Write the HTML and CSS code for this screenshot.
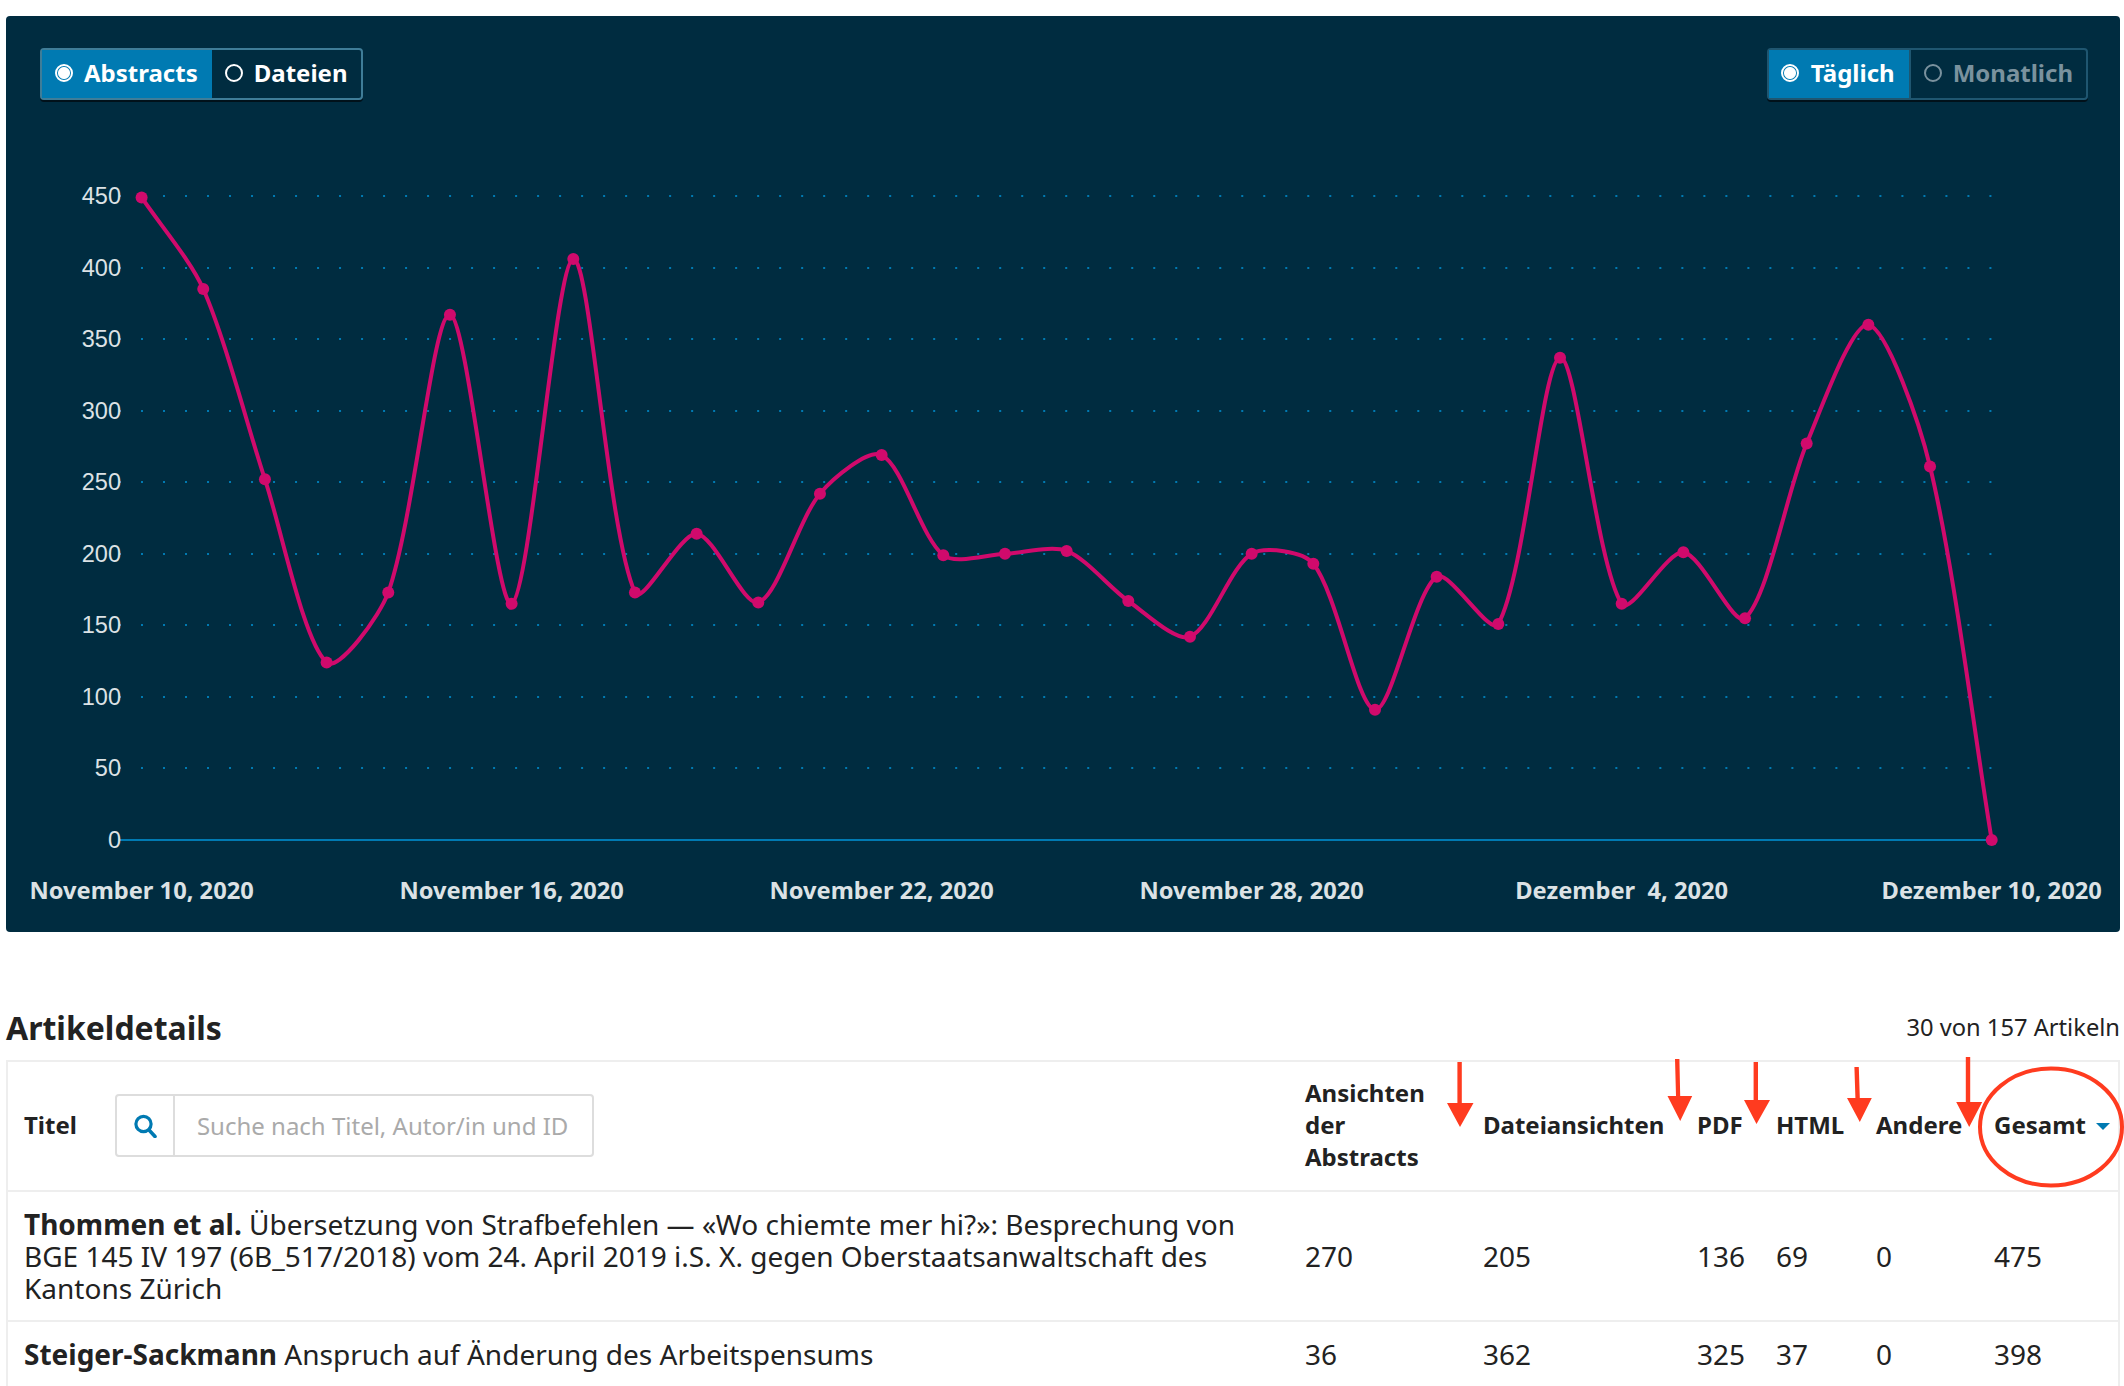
FILE: index.html
```html
<!DOCTYPE html>
<html lang="de">
<head>
    <meta charset="UTF-8">
    <title>Artikelstatistik</title>
    <link rel="stylesheet" href="styles.css">
</head>
<body>
    <main class="page">
        <section class="stats-graph">
            <div class="graph-toolbar">
                <div class="toggle">
                    <span class="toggle-btn is-active"><i class="radio is-checked"></i>Abstracts</span>
                    <span class="toggle-btn"><i class="radio"></i>Dateien</span>
                </div>
                <div class="toggle toggle-range">
                    <span class="toggle-btn is-active"><i class="radio is-checked"></i>Täglich</span>
                    <span class="toggle-btn is-disabled"><i class="radio"></i>Monatlich</span>
                </div>
            </div>
            <svg id="chart" class="chart" viewBox="6 120 2114 812"></svg>
        </section>

        <div class="details-head">
            <h2>Artikeldetails</h2>
            <span class="details-count">30 von 157 Artikeln</span>
        </div>

        <div class="details">
            <table class="details-table">
                <colgroup>
                    <col class="col-title">
                    <col class="col-abstracts">
                    <col class="col-files">
                    <col class="col-pdf">
                    <col class="col-html">
                    <col class="col-other">
                    <col class="col-total">
                </colgroup>
                <thead>
                    <tr>
                        <th class="cell-title">
                            <div class="title-head">
                                <span class="title-label">Titel</span>
                                <div class="search">
                                    <span class="search-icon">
                                        <svg width="24" height="24" viewBox="0 0 24 24"><circle cx="10.5" cy="10" r="7.6" fill="none" stroke="#007ab2" stroke-width="3.2"/><path d="M16 16l6 6.4" fill="none" stroke="#007ab2" stroke-width="3.6" stroke-linecap="round"/></svg>
                                    </span>
                                    <span class="search-input">Suche nach Titel, Autor/in und ID</span>
                                </div>
                            </div>
                        </th>
                        <th class="wrap">Ansichten der Abstracts</th>
                        <th>Dateiansichten</th>
                        <th>PDF</th>
                        <th>HTML</th>
                        <th>Andere</th>
                        <th>Gesamt<i class="sort-arrow"></i></th>
                    </tr>
                </thead>
                <tbody>
                    <tr>
                        <td class="cell-title"><b>Thommen et al.</b> Übersetzung von Strafbefehlen — «Wo chiemte mer hi?»: Besprechung von BGE 145 IV 197 (6B_517/2018) vom 24. April 2019 i.S. X. gegen Oberstaatsanwaltschaft des Kantons Zürich</td>
                        <td>270</td>
                        <td>205</td>
                        <td>136</td>
                        <td>69</td>
                        <td>0</td>
                        <td>475</td>
                    </tr>
                    <tr>
                        <td class="cell-title"><b>Steiger-Sackmann</b> Anspruch auf Änderung des Arbeitspensums</td>
                        <td>36</td>
                        <td>362</td>
                        <td>325</td>
                        <td>37</td>
                        <td>0</td>
                        <td>398</td>
                    </tr>
                </tbody>
            </table>
        </div>
    </main>

    <!-- red markup someone drew on top of the screenshot -->
    <svg class="markup" width="2124" height="1386" viewBox="0 0 2124 1386">
        <g fill="#ff3b1f" stroke="none">
            <path d="M1457.4 1062h4.4v41h11.7l-13.5 24-13-24h10.400z"/>
            <path d="M1675 1059h4.400l.8 37h12l-12 25-12.700-25h8.500z"/>
            <path d="M1753.600 1062h4.400v38h12l-13.500 24-12.500-24h9.600z"/>
            <path d="M1854.400 1067h4.400l1 31h12l-12 24-12.800-24h8.400z"/>
            <path d="M1965.800 1057h4.400v45h12l-13 25-13-25h9.600z"/>
        </g>
        <ellipse cx="2051" cy="1127" rx="71" ry="58.500" fill="none" stroke="#ff3b1f" stroke-width="4"/>
    </svg>

    <script src="chart.js"></script>
</body>
</html>
```

FILE: styles.css
```css
html {
    overflow: hidden;
}
body {
    margin: 0;
    font-family: 'Noto Sans', sans-serif;
    color: #222;
    background-color: white;
}
.page {
    padding: 16px 4px 0 6px;
}
.stats-graph {
    background-color: #002c40;
    border-radius: 4px;
    height: 916px;
}
.graph-toolbar {
    display: flex;
    justify-content: space-between;
    padding: 32px 32px 20px 34px;
}
.toggle {
    display: flex;
    height: 52px;
    box-sizing: border-box;
    border: 2px solid #3f7d98;
    border-radius: 4px;
    box-shadow: 0 2px 0 #00111a;
    color: white;
    font-size: 24px;
    font-weight: 700;
}
.toggle-range {
    border-color: #1f5670;
}
.toggle-btn {
    display: flex;
    align-items: center;
    gap: 11px;
    padding: 0 13px 4px;
}
.toggle-btn.is-active {
    background-color: #007ab2;
    padding-right: 14px;
}
.toggle-btn.is-disabled {
    color: #7a929e;
    border-left: 2px solid #1f5670;
}
.toggle-range .toggle-btn.is-active {
    padding-left: 12px;
    gap: 12px;
}
.radio {
    width: 18px;
    height: 18px;
    margin-top: 2px;
    box-sizing: border-box;
    border: 2px solid currentColor;
    border-radius: 50%;
}
.radio.is-checked {
    background: radial-gradient(circle, white 5.500px, transparent 6.500px);
}
.chart {
    display: block;
    width: 2114px;
    height: 812px;
}
.grid-line {
    stroke: #007ab2;
    stroke-width: 2;
    stroke-dasharray: 2 20.005;
    stroke-dashoffset: 1;
}
.zero-line {
    stroke: #007ab2;
    stroke-width: 2;
}
.data-line {
    fill: none;
    stroke: #d00a6c;
    stroke-width: 4;
}
.data-point {
    fill: #d00a6c;
}
.y-label {
    fill: #dce2e5;
    font-family: 'Liberation Sans', sans-serif;
    font-size: 23.500px;
    text-anchor: end;
}
.x-label {
    fill: #dce2e5;
    font-family: 'Noto Sans', sans-serif;
    font-size: 23.700px;
    font-weight: 700;
    text-anchor: middle;
    white-space: pre;
}
.details-head {
    display: flex;
    justify-content: space-between;
    align-items: center;
    margin-top: 76px;
    margin-bottom: 12px;
    height: 40px;
}
.details-head h2 {
    margin: 0;
    font-size: 32px;
    line-height: 40px;
    font-weight: 700;
}
.details-count {
    font-size: 23.700px;
    padding-bottom: 2px;
}
.details {
    border: 2px solid #eee;
    border-bottom: none;
}
.details-table {
    width: 2110px;
    table-layout: fixed;
    border-collapse: collapse;
    font-size: 24px;
    line-height: 32px;
}
.col-title { width: 1273px; }
.col-abstracts { width: 178px; }
.col-files { width: 214px; }
.col-pdf { width: 79px; }
.col-html { width: 100px; }
.col-other { width: 118px; }
.col-total { width: 148px; }
.details-table th {
    height: 129px;
    padding: 0 0 3px 24px;
    box-sizing: border-box;
    text-align: left;
    white-space: nowrap;
    font-weight: 700;
}
.details-table th.wrap {
    white-space: normal;
}
.details-table td {
    padding: 16px 0 16px 24px;
    border-top: 2px solid #eee;
    font-size: 28px;
}
.details-table .cell-title {
    padding-left: 16px;
    padding-right: 24px;
}
.details-table th.cell-title {
    padding-bottom: 1px;
}
.title-head {
    display: flex;
    align-items: center;
    gap: 38px;
}
.title-label {
    padding-bottom: 2px;
}
.search {
    display: flex;
    width: 479px;
    height: 63px;
    box-sizing: border-box;
    border: 2px solid #ddd;
    border-radius: 4px;
    font-weight: 400;
}
.search-icon {
    display: flex;
    align-items: center;
    justify-content: center;
    width: 56px;
    border-right: 2px solid #ddd;
}
.search-input {
    display: flex;
    align-items: center;
    padding-left: 22px;
    color: #aaa;
}
.sort-arrow {
    display: inline-block;
    margin-left: 10px;
    vertical-align: middle;
    border-top: 7px solid #007ab2;
    border-left: 7px solid transparent;
    border-right: 7px solid transparent;
}
.markup {
    position: absolute;
    top: 0;
    left: 0;
    pointer-events: none;
}
```

FILE: chart.js
```js
// Daily abstract views, drawn the way the stats page draws its line chart
const values = [449, 385, 252, 124, 173, 367, 165, 406, 173, 214, 166, 242, 269, 199, 200, 202,
    167, 142, 200, 193, 91, 184, 151, 337, 165, 201, 155, 277, 360, 261, 0];
const xLabels = { 0: 'November 10, 2020', 6: 'November 16, 2020', 12: 'November 22, 2020',
    18: 'November 28, 2020', 24: 'Dezember  4, 2020', 30: 'Dezember 10, 2020' };

const X0 = 141.6, X_STEP = 61.67, Y0 = 840, Y_PER_UNIT = 644 / 450;
const TENSION = 0.28;
const svg = document.getElementById('chart');

function add(tag, attrs, text) {
    const el = document.createElementNS('http://www.w3.org/2000/svg', tag);
    Object.keys(attrs).forEach(key => el.setAttribute(key, attrs[key]));
    if (text !== undefined) el.textContent = text;
    svg.appendChild(el);
    return el;
}

// Grid and y axis
for (let v = 0; v <= 450; v += 50) {
    const y = Y0 - v * Y_PER_UNIT;
    const gy = Math.round(y);
    const line = { x1: 120, x2: 1994, y1: gy, y2: gy, class: v === 0 ? 'zero-line' : 'grid-line' };
    add('line', line);
    add('text', { x: 121, y: y + 8, class: 'y-label' }, v);
}

const points = values.map((v, i) => ({ x: X0 + i * X_STEP, y: Y0 - v * Y_PER_UNIT }));

// Control points for a bezier line with tension
function controls(prev, cur, next) {
    const d1 = Math.hypot(cur.x - prev.x, cur.y - prev.y);
    const d2 = Math.hypot(next.x - cur.x, next.y - cur.y);
    const s1 = TENSION * d1 / (d1 + d2 || 1);
    const s2 = TENSION * d2 / (d1 + d2 || 1);
    return {
        before: { x: cur.x - s1 * (next.x - prev.x), y: cur.y - s1 * (next.y - prev.y) },
        after: { x: cur.x + s2 * (next.x - prev.x), y: cur.y + s2 * (next.y - prev.y) }
    };
}

const ctrl = points.map((p, i) => controls(points[i - 1] || p, p, points[i + 1] || p));
let d = `M${points[0].x} ${points[0].y}`;
for (let i = 1; i < points.length; i++) {
    const a = ctrl[i - 1].after, b = ctrl[i].before, p = points[i];
    d += `C${a.x} ${a.y} ${b.x} ${b.y} ${p.x} ${p.y}`;
}
add('path', { d: d, class: 'data-line' });

points.forEach(p => add('circle', { cx: p.x, cy: p.y, r: 6, class: 'data-point' }));

Object.keys(xLabels).forEach(i => {
    add('text', { x: points[i].x, y: 899, class: 'x-label' }, xLabels[i]);
});
```
